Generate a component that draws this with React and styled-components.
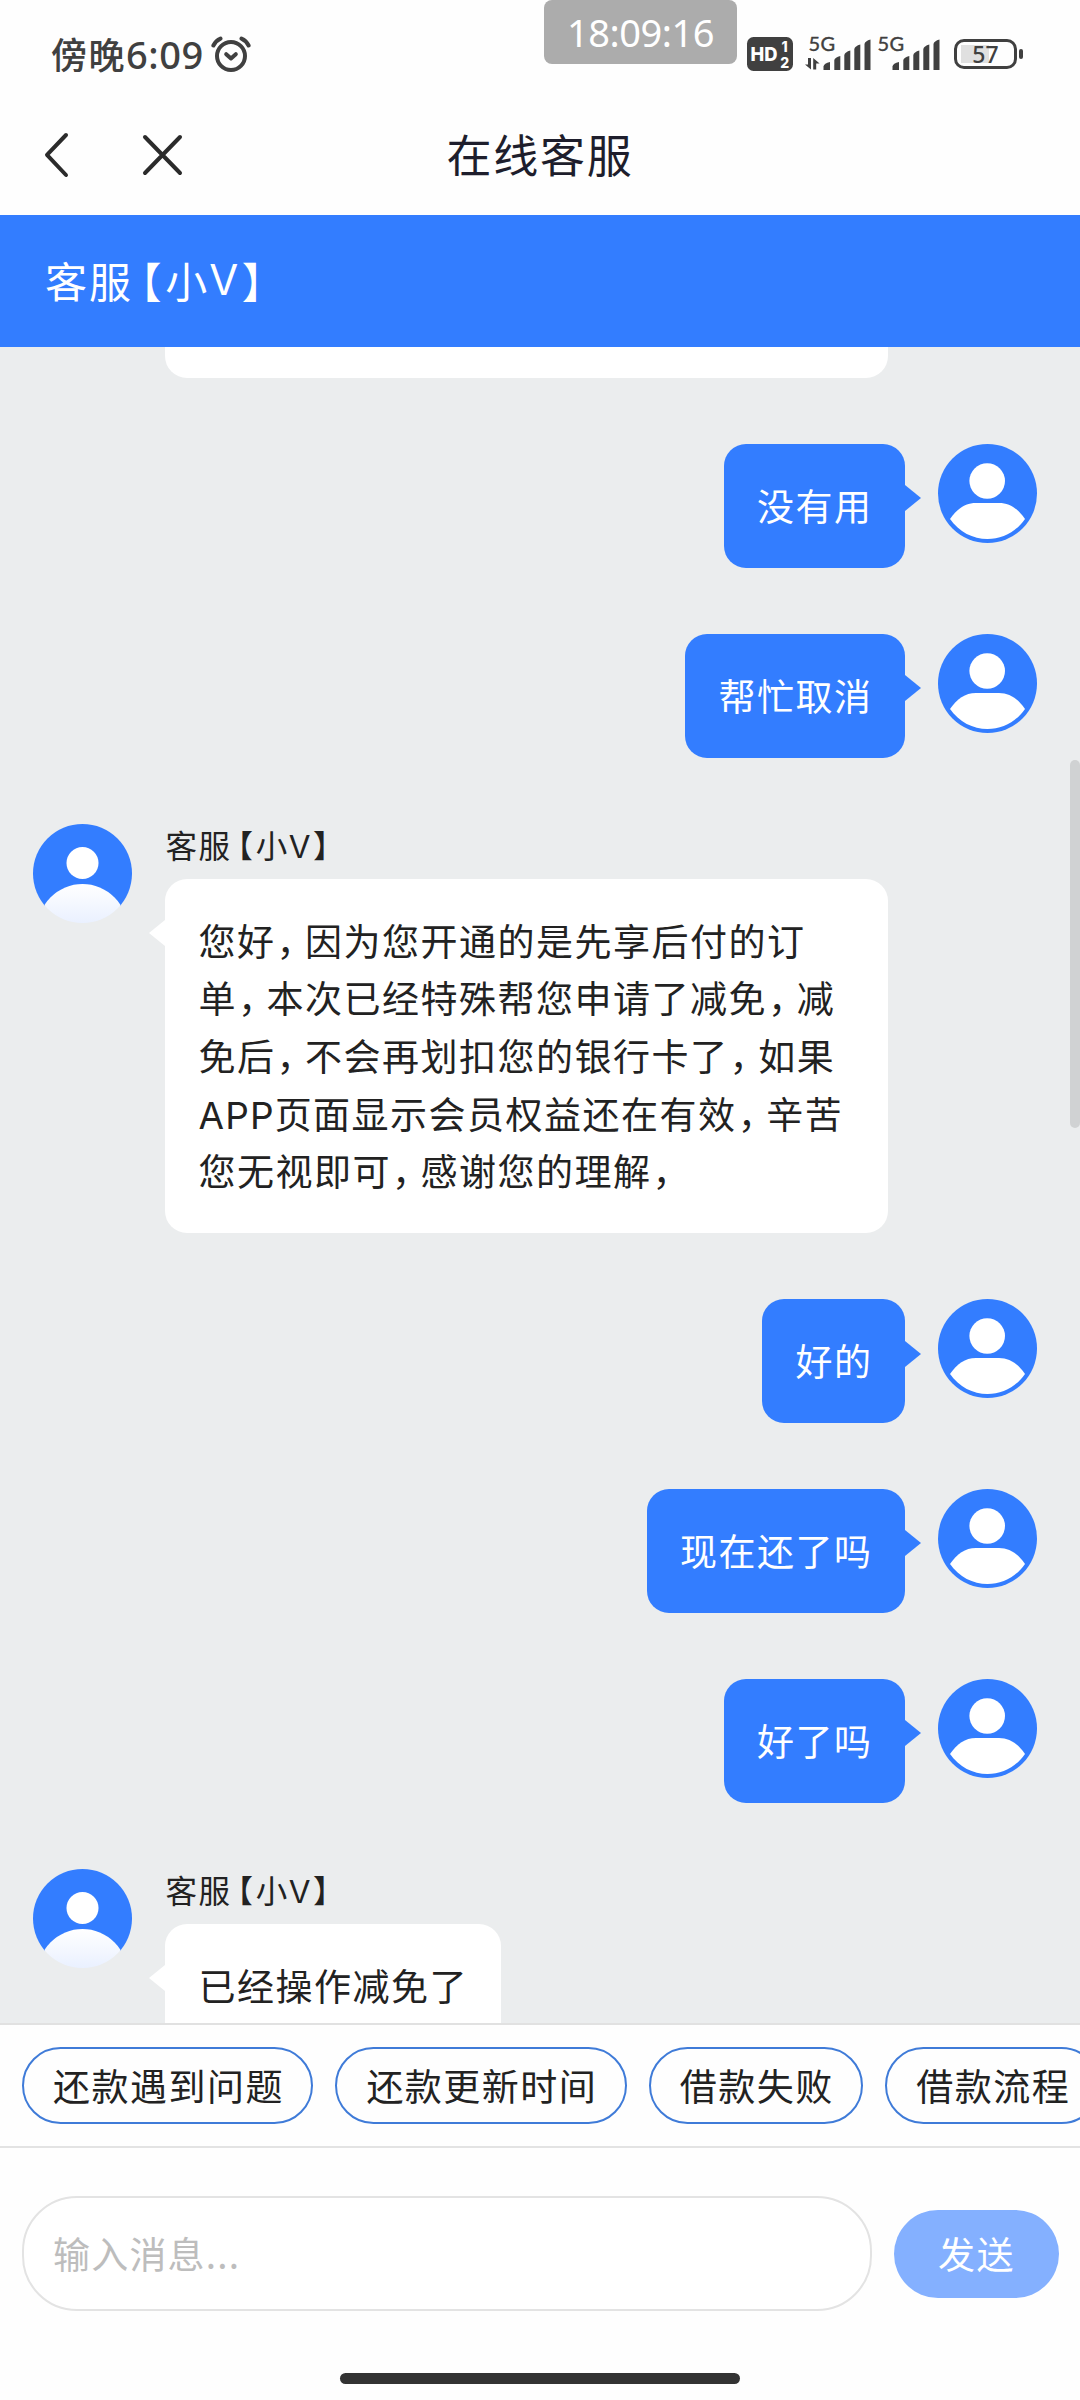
import React, { useState } from "react";
import styled, { createGlobalStyle, css } from "styled-components";

const messages = [
  { id: 1, from: "me", lines: ["没有用"] },
  { id: 2, from: "me", lines: ["帮忙取消"] },
  {
    id: 3,
    from: "agent",
    lines: [
      "您好，因为您开通的是先享后付的订",
      "单，本次已经特殊帮您申请了减免，减",
      "免后，不会再划扣您的银行卡了，如果",
      "APP页面显示会员权益还在有效，辛苦",
      "您无视即可，感谢您的理解，",
    ],
  },
  { id: 4, from: "me", lines: ["好的"] },
  { id: 5, from: "me", lines: ["现在还了吗"] },
  { id: 6, from: "me", lines: ["好了吗"] },
  { id: 7, from: "agent", lines: ["已经操作减免了"] },
];

const quickReplies = ["还款遇到问题", "还款更新时间", "借款失败", "借款流程"];

function AgentName() {
  return (
    <>
      客服<OpenBracket>【</OpenBracket>小<Latin>V</Latin>
      <CloseBracket>】</CloseBracket>
    </>
  );
}

// commas are set tighter than the full-width characters around them
function Line({ text }) {
  return (
    <TextLine>
      {text.split(/(，|[A-Z]+)/).map((part, i) => {
        if (part === "，") return <Comma key={i}>，</Comma>;
        if (/^[A-Z]+$/.test(part)) return <Latin key={i}>{part}</Latin>;
        return part;
      })}
    </TextLine>
  );
}

function UserAvatar() {
  return (
    <Avatar viewBox="0 0 99 99">
      <circle cx="49.5" cy="49.5" r="49.5" fill="#337dff" />
      <circle cx="49.2" cy="37" r="17.8" fill="#fff" />
      <path
        d="M12 75C19 65 27 59 38 59H61C72 59 80 65 87 75C78 88 64 95 49.5 95C35 95 21 88 12 75Z"
        fill="#fff"
      />
    </Avatar>
  );
}

function AgentAvatar() {
  return (
    <Avatar viewBox="0 0 99 99">
      <defs>
        <clipPath id="round">
          <circle cx="49.5" cy="49.5" r="49.5" />
        </clipPath>
        <linearGradient id="shirt" x1="0" y1="0" x2="0" y2="1">
          <stop offset="0" stopColor="#fff" />
          <stop offset="0.45" stopColor="#e9f0ff" />
        </linearGradient>
      </defs>
      <circle cx="49.5" cy="49.5" r="49" fill="#e9f0ff" />
      <g clipPath="url(#round)">
        <rect width="99" height="82" fill="#337dff" />
        <circle cx="49.5" cy="39" r="16" fill="#fff" />
        <circle cx="49.5" cy="105" r="45" fill="url(#shirt)" />
      </g>
    </Avatar>
  );
}

function Signal({ data }) {
  return (
    <SignalIcon viewBox="0 0 68 36">
      <text x="3.5" y="15">5G</text>
      {data && (
        <>
          <path d="M6 22V33.5L0 28.5H3V22Z" />
          <path d="M8.2 33.5V22L14.6 27.5H11.2V33.5Z" />
        </>
      )}
      <path d="M18.5 30.5Q19 27 25 26V34H18.5Z" />
      <path d="M29.3 24Q30 21.5 35.3 20V34H29.3Z" />
      <path d="M39.3 19Q40 16 45.3 14.5V34H39.3Z" />
      <path d="M49.3 13Q50 10 55.3 8.5V34H49.3Z" />
      <path d="M59.5 8Q60 5 65.5 3.5V34H59.5Z" />
    </SignalIcon>
  );
}

function StatusBar() {
  return (
    <Status>
      <Clock>
        傍晚<Digits>6:09</Digits>
      </Clock>
      <AlarmIcon viewBox="0 0 40 38" fill="none" stroke="#404040" strokeLinecap="round">
        <circle cx="20" cy="21" r="14" strokeWidth="4" />
        <path d="M2.4 10.5C4 7.3 6.2 5 9.5 3.6" strokeWidth="4" />
        <path d="M37.6 10.5C36 7.3 33.8 5 30.5 3.6" strokeWidth="4" />
        <path d="M15.2 19.2L20 23.5L24.8 19.2" strokeWidth="4" strokeLinejoin="round" />
      </AlarmIcon>
      <TimeBadge>18:09:16</TimeBadge>
      <HdIcon viewBox="0 0 46 34">
        <rect width="46" height="34" rx="6.5" fill="#404040" />
        <text x="3.5" y="24" fontSize="19" textLength="27" lengthAdjust="spacingAndGlyphs">HD</text>
        <text x="34.5" y="14.8" fontSize="14">1</text>
        <text x="33.2" y="30.6" fontSize="14">2</text>
      </HdIcon>
      <SignalGroup>
        <Signal data />
        <Signal />
      </SignalGroup>
      <Battery>
        <BatteryBody>57</BatteryBody>
        <BatteryTip />
      </Battery>
    </Status>
  );
}

function Message({ message }) {
  const mine = message.from === "me";
  return (
    <MessageRow $mine={mine}>
      {mine ? <UserAvatar /> : <AgentAvatar />}
      <MessageBody>
        {!mine && (
          <SenderName>
            <AgentName />
          </SenderName>
        )}
        <Bubble $mine={mine} $full={message.lines.length > 1}>
          {message.lines.map((line) => (
            <Line key={line} text={line} />
          ))}
        </Bubble>
      </MessageBody>
    </MessageRow>
  );
}

function App() {
  const [draft, setDraft] = useState("");

  return (
    <Screen>
      <GlobalStyle />
      <StatusBar />
      <TitleBar>
        <NavIcons>
          <svg width="26" height="46" viewBox="0 0 26 46">
            <path d="M23 3L4 22.8L23 43" />
          </svg>
          <svg width="42" height="46" viewBox="0 0 42 46">
            <path d="M3 5L38 41M38 5L3 41" />
          </svg>
        </NavIcons>
        <Title>在线客服</Title>
      </TitleBar>
      <AgentHeader>
        <AgentName />
      </AgentHeader>
      <Chat>
        <PreviousBubble />
        {messages.map((message) => (
          <Message key={message.id} message={message} />
        ))}
        <ScrollThumb />
      </Chat>
      <QuickBar>
        {quickReplies.map((reply) => (
          <Chip key={reply}>{reply}</Chip>
        ))}
      </QuickBar>
      <Composer>
        <MessageInput
          value={draft}
          placeholder="输入消息..."
          onChange={(e) => setDraft(e.target.value)}
        />
        <SendButton>发送</SendButton>
      </Composer>
      <HomeArea>
        <HomeIndicator />
      </HomeArea>
    </Screen>
  );
}

const GlobalStyle = createGlobalStyle`
  * {
    box-sizing: border-box;
  }

  body {
    margin: 0;
    background: #fff;
    font-family: "Noto Sans CJK SC", sans-serif;
    text-spacing-trim: space-all;
  }
`;

const Screen = styled.div`
  display: flex;
  flex-direction: column;
  width: 1080px;
  height: 2400px;
  overflow: hidden;
  background: #fefefe;
  color: #222;
`;

const Status = styled.div`
  position: relative;
  display: flex;
  align-items: center;
  height: 108px;
  padding-left: 51px;
  flex-shrink: 0;
  color: #404040;
`;

const Clock = styled.div`
  width: 160px;
  padding-bottom: 2px;
  font-size: 36px;
  font-weight: 500;
  letter-spacing: 1.5px;
  line-height: 54px;
  white-space: nowrap;
`;

const Digits = styled.span`
  font-family: "Noto Sans", sans-serif;
  font-size: 38px;
  letter-spacing: 0.6px;
`;

const AlarmIcon = styled.svg`
  width: 40px;
  height: 38px;
`;

const TimeBadge = styled.div`
  position: absolute;
  top: 0;
  left: 544px;
  width: 193px;
  height: 64px;
  border-radius: 8px;
  background: #acacac;
  color: #fff;
  font-family: "Noto Sans", sans-serif;
  font-size: 38px;
  letter-spacing: -0.5px;
  line-height: 65px;
  text-align: center;
`;

const HdIcon = styled.svg`
  width: 46px;
  height: 34px;
  margin-left: 496px;
  overflow: visible;

  text {
    fill: #fff;
    font-family: Inter, sans-serif;
    font-weight: 800;
  }
`;

const SignalGroup = styled.div`
  display: flex;
  gap: 1px;
  margin-left: 12px;
`;

const SignalIcon = styled.svg`
  width: 68px;
  height: 36px;
  overflow: visible;
  fill: #404040;

  text {
    font-family: Lato, sans-serif;
    font-size: 20px;
    letter-spacing: 0.5px;
    stroke: #404040;
    stroke-width: 0.4;
  }
`;

const Battery = styled.div`
  display: flex;
  align-items: center;
  gap: 2px;
  margin-left: 12px;
`;

const BatteryBody = styled.div`
  width: 63px;
  height: 30px;
  border: 3.5px solid #404040;
  border-radius: 10px;
  background: linear-gradient(#e0e0e0, #e0e0e0) 4px 50% / 28px 18px no-repeat;
  font-family: "Noto Sans", sans-serif;
  font-size: 23px;
  font-weight: 500;
  line-height: 24px;
  text-align: center;
`;

const BatteryTip = styled.div`
  width: 4px;
  height: 10px;
  border-radius: 2px;
  background: #404040;
`;

const TitleBar = styled.div`
  display: grid;
  grid-template-columns: 1fr auto 1fr;
  align-items: center;
  height: 107px;
  padding-bottom: 13px;
  flex-shrink: 0;
`;

const NavIcons = styled.div`
  display: flex;
  align-items: center;
  gap: 73px;
  padding-left: 43px;

  svg {
    fill: none;
    stroke: #2b2b2b;
    stroke-width: 4;
    stroke-linecap: round;
    stroke-linejoin: round;
  }
`;

const Title = styled.div`
  padding-bottom: 2px;
  color: #1e1e2c;
  font-size: 45px;
  letter-spacing: 1.7px;
  line-height: 60px;
`;

const AgentHeader = styled.div`
  display: flex;
  align-items: center;
  height: 132px;
  padding: 0 45px 4px;
  flex-shrink: 0;
  background: #337dff;
  color: #fff;
  font-size: 42px;
  letter-spacing: 2px;
  white-space: nowrap;
`;

const halfWidth = css`
  font-feature-settings: "halt";
  letter-spacing: 0;
`;

const OpenBracket = styled.span`
  ${halfWidth}
  margin-left: 0.18em;
  margin-right: 0.09em;
`;

const CloseBracket = styled.span`
  ${halfWidth}
  margin-left: 0.05em;
`;

const Latin = styled.span`
  font-family: Inter, sans-serif;
  letter-spacing: 0.03em;
`;

const Comma = styled.span`
  margin-left: 1px;
  letter-spacing: -8.4px;
`;

const Chat = styled.div`
  position: relative;
  display: flex;
  flex-direction: column;
  gap: 66.2px;
  height: 1676px;
  padding: 0 43px 0 33px;
  flex-shrink: 0;
  overflow: hidden;
  background: #ebedee;
`;

const PreviousBubble = styled.div`
  width: 723px;
  height: 30.8px;
  margin-left: 132px;
  flex-shrink: 0;
  border-radius: 0 0 22px 22px;
  background: #fff;
`;

const MessageRow = styled.div`
  display: flex;
  flex-direction: ${(props) => (props.$mine ? "row-reverse" : "row")};
  align-items: flex-start;
  gap: 33px;
  flex-shrink: 0;
`;

const Avatar = styled.svg`
  width: 99px;
  height: 99px;
  flex-shrink: 0;
`;

const MessageBody = styled.div`
  display: flex;
  flex-direction: column;
  align-items: flex-start;
`;

const SenderName = styled.div`
  height: 54.9px;
  padding-left: 0.5px;
  font-size: 31.5px;
  letter-spacing: 1.5px;
  line-height: 40px;
  white-space: nowrap;
`;

const Bubble = styled.div`
  position: relative;
  width: ${(props) => (props.$full ? "723px" : "auto")};
  padding: 33px 32.5px 33px 33.5px;
  border-radius: 22px;
  background: ${(props) => (props.$mine ? "#337dff" : "#fff")};
  color: ${(props) => (props.$mine ? "#fff" : "#222")};
  font-size: 37px;
  letter-spacing: 1.5px;
  line-height: 57.7px;

  &::before {
    content: "";
    position: absolute;
    top: 41.3px;
    border: 13.75px solid transparent;
    ${(props) =>
      props.$mine
        ? "left: 100%; border-left: 16.5px solid #337dff; border-right: 0;"
        : "right: 100%; border-right: 16.5px solid #fff; border-left: 0;"}
  }
`;

const TextLine = styled.div`
  height: 57.7px;
  white-space: nowrap;
`;

const ScrollThumb = styled.div`
  position: absolute;
  top: 413px;
  right: 0;
  width: 10px;
  height: 368px;
  border-radius: 5px;
  background: #d0d2d3;
`;

const QuickBar = styled.div`
  display: flex;
  gap: 22px;
  height: 125px;
  padding: 22px 22px 0;
  flex-shrink: 0;
  overflow: hidden;
  border-top: 2px solid #e1e1e1;
  border-bottom: 2px solid #e3e3e3;
`;

const Chip = styled.div`
  height: 77px;
  padding: 0 27.6px 0 28.9px;
  flex-shrink: 0;
  border: 2px solid #3f7bd8;
  border-radius: 39px;
  font-size: 37px;
  letter-spacing: 1.5px;
  line-height: 73px;
  white-space: nowrap;
`;

const Composer = styled.div`
  display: flex;
  align-items: center;
  gap: 22px;
  height: 211px;
  padding: 0 21px 0 22px;
  flex-shrink: 0;
`;

const MessageInput = styled.input`
  width: 850px;
  height: 115px;
  padding: 0 29px 2px;
  border: 2px solid #e3e3e3;
  border-radius: 55px;
  outline: none;
  background: #fff;
  font-family: "Noto Sans CJK SC", sans-serif;
  font-size: 37px;
  letter-spacing: 1.2px;

  &::placeholder {
    color: #bdbdbd;
  }
`;

const SendButton = styled.button`
  width: 165px;
  height: 88px;
  padding: 0 0 2px;
  border: none;
  border-radius: 44px;
  background: #84b0ff;
  color: #fff;
  font-family: "Noto Sans CJK SC", sans-serif;
  font-size: 37px;
  letter-spacing: 1.5px;
  cursor: pointer;
`;

const HomeArea = styled.div`
  display: flex;
  justify-content: center;
  padding-top: 14px;
`;

const HomeIndicator = styled.div`
  width: 400px;
  height: 11px;
  border-radius: 6px;
  background: #333;
`;

export default App;
